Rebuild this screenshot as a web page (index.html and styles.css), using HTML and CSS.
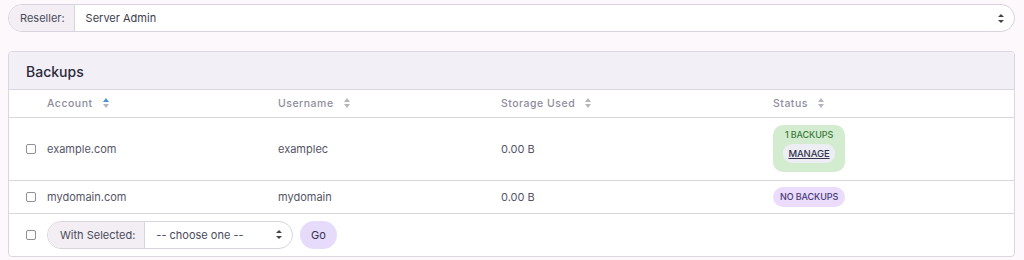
FILE: index.html
```html
<!DOCTYPE html>
<html lang="en">
<head>
	<meta charset="UTF-8">
	<title>Backups</title>
	<link rel="stylesheet" href="styles.css">
</head>
<body>

	<div class="inputGroup top">
		<span class="addon">Reseller:</span>
		<div class="select">
			<span>Server Admin</span>
			<i class="arrows"></i>
		</div>
	</div>

	<div class="panel">
		<div class="panelHead">Backups</div>
		<table class="list">
			<thead>
				<tr>
					<th class="chk"></th>
					<th class="c_acc">Account <i class="sort asc"></i></th>
					<th class="c_user">Username <i class="sort"></i></th>
					<th class="c_size">Storage Used <i class="sort"></i></th>
					<th class="c_stat">Status <i class="sort"></i></th>
				</tr>
			</thead>
			<tbody>
				<tr class="tall">
					<td class="chk"><span class="box"></span></td>
					<td>example.com</td>
					<td>examplec</td>
					<td>0.00 B</td>
					<td>
						<div class="badge ok">
							<span>1 BACKUPS</span>
							<a class="manage">MANAGE</a>
						</div>
					</td>
				</tr>
				<tr>
					<td class="chk"><span class="box"></span></td>
					<td>mydomain.com</td>
					<td>mydomain</td>
					<td>0.00 B</td>
					<td><span class="badge none">NO BACKUPS</span></td>
				</tr>
				<tr class="foot">
					<td class="chk"><span class="box"></span></td>
					<td colspan="4">
						<div class="footRow">
							<div class="inputGroup small">
								<span class="addon">With Selected:</span>
								<div class="select">
									<span>-- choose one --</span>
									<i class="arrows"></i>
								</div>
							</div>
							<span class="goBtn">Go</span>
						</div>
					</td>
				</tr>
			</tbody>
		</table>
	</div>

</body>
</html>
```

FILE: styles.css
```css
* {padding: 0; margin: 0; box-sizing: border-box;}
body {background: #fcf8fc; font-family: Inter, "Noto Sans", sans-serif; font-size: 11px; color: #4a4a5a; padding: 4px 9px 0 8px;}

.inputGroup {display: flex; height: 28px; border: 1px solid #d8d3dc; border-radius: 14px; background: #fff; overflow: hidden;}
.inputGroup .addon {display: flex; align-items: center; padding: 0 9px 0 11px; background: #f2eef4; border-right: 1px solid #d8d3dc; color: #4a4a5a;}
.inputGroup .select {flex: 1; display: flex; align-items: center; justify-content: space-between; padding: 0 10px 0 11px; color: #3d3d4d;}
.arrows {display: inline-block; width: 6px; height: 9px; position: relative;}
.arrows:before, .arrows:after {content: ""; position: absolute; left: 0; border-left: 3px solid transparent; border-right: 3px solid transparent;}
.arrows:before {top: 0; border-bottom: 3.5px solid #444;}
.arrows:after {bottom: 0; border-top: 3.5px solid #444;}

.panel {margin-top: 19px; border: 1px solid #dcd7df; border-radius: 4px; background: #fff; overflow: hidden;}
.panelHead {height: 38px; background: #f3eff6; border-bottom: 1px solid #dcd7df; padding: 11px 0 0 17px; font-size: 14px; font-weight: 500; color: #2a2a3a;}

.list {width: 100%; border-collapse: collapse; table-layout: fixed;}
.list th, .list td {text-align: left; padding: 0 7px; vertical-align: middle;}
.list th {height: 27px; font-size: 10.5px; font-weight: 500; letter-spacing: .5px; color: #8f8d9c; border-bottom: 1px solid #dcd7df;}
.list td {height: 33px; border-bottom: 1px solid #dcd7df; color: #555566;}
.list tr.tall td {height: 63px;}
.list tr.foot td {height: 43px; border-bottom: none;}
.list .chk {width: 31px; padding: 0 0 0 17px;}
.list .c_acc {width: 231px;}
.list .c_user {width: 223px;}
.list .c_size {width: 272px;}

.box {display: block; width: 10px; height: 10px; border: 1px solid #8f8f99; border-radius: 2px; background: #fff;}

.sort {display: inline-block; width: 6px; height: 10px; position: relative; margin-left: 7px; vertical-align: -1px;}
.sort:before, .sort:after {content: ""; position: absolute; left: 0; border-left: 3px solid transparent; border-right: 3px solid transparent;}
.sort:before {top: 0; border-bottom: 4px solid #b6b4c0;}
.sort:after {bottom: 0; border-top: 4px solid #b6b4c0;}
.sort.asc:before {border-bottom-color: #4a90e2;}

.badge {display: inline-flex; font-size: 9px; font-weight: 500; letter-spacing: -.1px;}
.badge.ok {flex-direction: column; align-items: center; width: 72px; padding: 4px 0 9px; background: #d3ecd0; border-radius: 10px; color: #3d7a3d;}
.badge.ok .manage {margin-top: 4px; padding: 4px 5px; background: #eceef4; border-radius: 9px; font-size: 9.5px; color: #33334d; text-decoration: underline;}
.badge.none {align-items: center; height: 20px; padding: 0 7px; background: #ebdcfc; border-radius: 10px; color: #463a78;}

.footRow {display: flex; align-items: center;}
.inputGroup.small {width: 246px;}
.inputGroup.small .addon {padding: 0 9px 0 12px;}
.inputGroup.small .select {color: #4a4a5a;}
.goBtn {display: flex; align-items: center; justify-content: center; width: 37px; height: 28px; margin-left: 7px; background: #e7dbfc; border-radius: 14px; font-size: 11px; color: #33334d;}
```
